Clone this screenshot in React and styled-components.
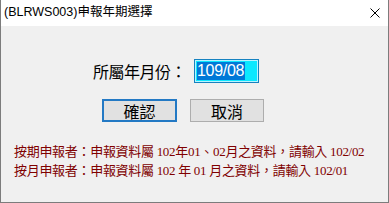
import React from "react";
import styled, { createGlobalStyle } from "styled-components";

const Global = createGlobalStyle`
  html, body {
    margin: 0;
    padding: 0;
    background: #f0f0f0;
  }
`;

const Window = styled.div`
  width: 389px;
  height: 203px;
  box-sizing: border-box;
  border: 1px solid #7c7c7c;
  border-top: none;
  display: flex;
  flex-direction: column;
  background: #f0f0f0;
  font-family: "Liberation Sans", "Noto Sans CJK TC", sans-serif;
`;

const TitleBar = styled.div`
  height: 26px;
  flex: none;
  background: #ffffff;
  display: flex;
  align-items: center;
  justify-content: space-between;
  padding: 0 8px 0 3px;
  font-size: 12.5px;
  color: #000;
`;

const Title = styled.span`
  line-height: 1;
  padding-bottom: 1px;
`;

const CloseIcon = () => (
  <svg width="10" height="10" viewBox="0 0 10 10">
    <path d="M0.5 0.5 L9.5 9.5 M9.5 0.5 L0.5 9.5" stroke="#000" strokeWidth="1" />
  </svg>
);

const Body = styled.div`
  flex: 1;
  display: flex;
  flex-direction: column;
  padding: 33px 0 0 0;
`;

const FieldRow = styled.div`
  display: flex;
  align-items: center;
  padding-left: 92px;
  gap: 8px;
`;

const Label = styled.span`
  font-family: "Noto Sans CJK TC", sans-serif;
  font-size: 16px;
  line-height: 23px;
  color: #000;
  letter-spacing: -0.5px;
`;

const Input = styled.div`
  width: 65px;
  height: 24px;
  box-sizing: border-box;
  border: 1px solid #1682c0;
  box-shadow: inset 0 0 0 1px #b8f4ff;
  background: #0ce8ff;
  display: flex;
  align-items: center;
  padding-left: 2px;
`;

const Selected = styled.span`
  background: #0078d7;
  color: #fff;
  font-family: "Liberation Sans", sans-serif;
  font-size: 16px;
  line-height: 18px;
  height: 18px;
  padding: 0 1px 0 0;
  letter-spacing: -0.3px;
`;

const ButtonRow = styled.div`
  display: flex;
  padding-left: 101px;
  gap: 13px;
  margin-top: 16px;
`;

const Button = styled.div`
  width: ${(p) => p.$w}px;
  height: 23px;
  box-sizing: border-box;
  background: #e1e1e1;
  border: ${(p) => (p.$default ? "2px solid #2379c4" : "1px solid #adadad")};
  display: flex;
  align-items: center;
  justify-content: center;
  font-family: "Noto Sans CJK TC", sans-serif;
  font-size: 16px;
  color: #000;
`;

const Notes = styled.div`
  margin-top: 20px;
  padding-left: 13px;
  color: #800000;
  font-family: "Liberation Serif", "Noto Sans CJK TC", serif;
  font-size: 13px;
  line-height: 19px;
  letter-spacing: -0.3px;
`;

export default function App() {
  return (
    <>
      <Global />
      <Window>
        <TitleBar>
          <Title>(BLRWS003)申報年期選擇</Title>
          <CloseIcon />
        </TitleBar>
        <Body>
          <FieldRow>
            <Label>所屬年月份：</Label>
            <Input>
              <Selected>109/08</Selected>
            </Input>
          </FieldRow>
          <ButtonRow>
            <Button $w={75} $default>確認</Button>
            <Button $w={74}>取消</Button>
          </ButtonRow>
          <Notes>
            <div>按期申報者：申報資料屬 102年01、02月之資料，請輸入 102/02</div>
            <div>按月申報者：申報資料屬 102 年 01 月之資料，請輸入 102/01</div>
          </Notes>
        </Body>
      </Window>
    </>
  );
}
